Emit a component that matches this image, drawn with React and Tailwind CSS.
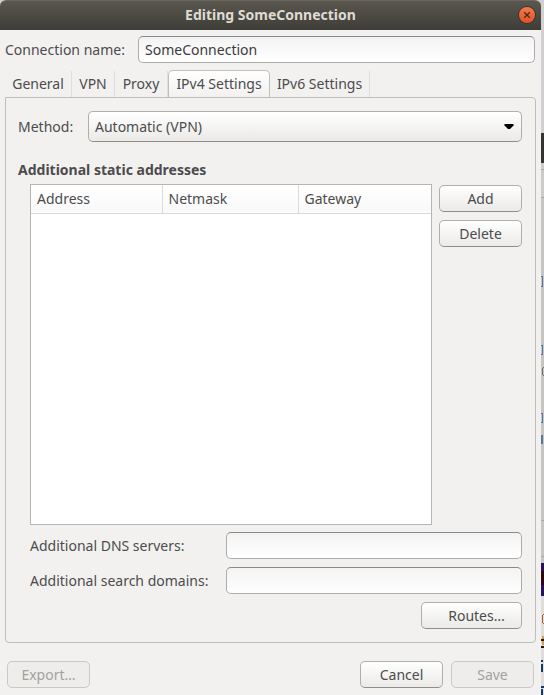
import React from "react";

const buttonBase =
  "h-[27px] rounded-[5px] border text-center leading-5 focus:outline-none";
const buttonLive =
  "border-[#b0aeab] border-b-[#8f8d8a] bg-linear-to-b from-white to-[#ebeae8] text-[#4c4c4c]";
const buttonOff = "border-[#cbc9c7] bg-[#eeedeb] text-[#a3a19e]";
const entry =
  "h-[27px] min-w-0 rounded-[5px] border border-[#aeaca9] border-t-[#8c8a87] bg-linear-to-b from-[#f3f3f3] to-white px-1.5 text-[#3c3c3c] focus:outline-none";

function Button({ className = "", disabled = false, children }) {
  return (
    <button
      type="button"
      disabled={disabled}
      className={`${buttonBase} ${disabled ? buttonOff : buttonLive} ${className}`}
    >
      {children}
    </button>
  );
}

function TitleBar() {
  return (
    <header className="relative flex h-[30px] items-center justify-center rounded-t-[6px] border-t border-[#6b675f] bg-linear-to-b from-[#5a574f] to-[#3f3d38] pb-0.5">
      <h1 className="text-sm font-bold text-[#dfdbd2]">Editing SomeConnection</h1>
      <button
        type="button"
        aria-label="Close"
        className="absolute top-1.5 right-1.5 flex size-4 items-center justify-center rounded-full bg-linear-to-b from-[#f4784f] to-[#e2511f] ring-1 ring-[#35332e]"
      >
        <svg viewBox="0 0 16 16" className="size-4" aria-hidden="true">
          <path d="M5.2 5.2l5.6 5.6M10.8 5.2l-5.6 5.6" stroke="#4b2a1b" strokeWidth="1.3" />
        </svg>
      </button>
    </header>
  );
}

const tabs = [
  { name: "General", width: "w-[67px]" },
  { name: "VPN", width: "w-[43px]" },
  { name: "Proxy", width: "w-[53px]" },
  { name: "IPv4 Settings", width: "w-[102px]", active: true },
  { name: "IPv6 Settings", width: "w-[100px]" },
];

function Tabs() {
  return (
    <div role="tablist" className="mx-[5px] mt-[7px] flex h-[27px] items-end whitespace-nowrap">
      {tabs.map((tab) => (
        <button
          key={tab.name}
          type="button"
          role="tab"
          aria-selected={Boolean(tab.active)}
          className={`flex shrink-0 items-center justify-center ${tab.width} ${
            tab.active
              ? "h-[27px] rounded-t-[5px] border border-b-0 border-[#c0beba] bg-linear-to-b from-white to-[#f2f1f0]"
              : "h-[26px] border-r border-[#e0dedc]"
          }`}
        >
          {tab.name}
        </button>
      ))}
    </div>
  );
}

function AddressTable() {
  return (
    <div className="min-w-0 flex-1 border border-[#b8b6b2] bg-white">
      <table className="w-full table-fixed border-collapse text-left">
        <colgroup>
          <col className="w-[131px]" />
          <col className="w-[136px]" />
          <col />
        </colgroup>
        <thead>
          <tr className="h-7 border-b border-[#d8d7d4] bg-linear-to-b from-white to-[#f9f9f9]">
            <th className="border-r border-[#dddbd9] px-1.5 font-normal">Address</th>
            <th className="border-r border-[#dddbd9] px-1.5 font-normal">Netmask</th>
            <th className="px-1.5 font-normal">Gateway</th>
          </tr>
        </thead>
        <tbody />
      </table>
    </div>
  );
}

function Ipv4Panel() {
  return (
    <section
      role="tabpanel"
      className="mx-[5px] flex flex-1 flex-col rounded-[4px] rounded-tl-none border border-[#c0beba] py-[13px] pr-[13px] pl-3"
    >
      <div className="flex items-center">
        <label htmlFor="method" className="w-[70px] shrink-0">
          Method:
        </label>
        <div className="relative min-w-0 flex-1">
          <select
            id="method"
            className="block h-[31px] w-full appearance-none rounded-[5px] border border-[#b0aeab] border-b-[#8f8d8a] bg-linear-to-b from-white to-[#ebeae8] px-1.5 focus:outline-none"
          >
            <option>Automatic (VPN)</option>
          </select>
          <svg
            viewBox="0 0 10 6"
            className="pointer-events-none absolute top-[13px] right-2 h-1.5 w-2.5"
            aria-hidden="true"
          >
            <path d="M0.5 0h9v1.5L6 5H4L0.5 1.5z" fill="#000" />
          </svg>
        </div>
      </div>

      <h2 className="mt-[18px] font-bold">Additional static addresses</h2>

      <div className="mt-1 ml-3 flex flex-1 flex-col gap-[7px]">
        <div className="flex flex-1 gap-[7px]">
          <AddressTable />
          <div className="flex w-[83px] flex-col gap-2 pt-px">
            <Button>Add</Button>
            <Button>Delete</Button>
          </div>
        </div>
        <div className="flex flex-col gap-2">
          <div className="flex items-center">
            <label htmlFor="dns" className="w-[196px] shrink-0">
              Additional DNS servers:
            </label>
            <input id="dns" type="text" className={`${entry} flex-1`} />
          </div>
          <div className="flex items-center">
            <label htmlFor="domains" className="w-[196px] shrink-0">
              Additional search domains:
            </label>
            <input id="domains" type="text" className={`${entry} flex-1`} />
          </div>
          <Button className="w-[101px] self-end pl-2.5">Routes…</Button>
        </div>
      </div>
    </section>
  );
}

function Desktop() {
  return (
    <svg
      viewBox="0 0 3 695"
      preserveAspectRatio="none"
      className="w-[3px] shrink-0 self-stretch"
      aria-hidden="true"
    >
      <path d="M0 0h3v695H0z" fill="#c6c5c4" />
      <path d="M0 0h3v133H0z" fill="#d0cfd1" />
      <path d="M0 133h3v30H0z" fill="#353432" />
      <path d="M0 163h3v34H0z" fill="#cccbca" />
      <path d="M0 169h3v1H0zM0 197h3v1H0zM0 520h3v1H0zM0 556h3v1H0z" fill="#aaa9a8" />
      <path d="M0 563h3v33H0z" fill="#271158" />
      <path d="M0 571h3v14H0z" fill="#2b0712" />
      <path d="M0 596h3v99H0z" fill="#dedddc" />
      <path
        d="M0 276h2v1H0zM1 277h1v10H1zM0 286h1v1H0zM0 345h2v1H0zM1 346h1v9H1zM0 354h1v1H0zM0 413h2v1H0zM1 414h1v9H1zM0 422h1v1H0zM0 435h2v9H0z"
        fill="#5877a0"
      />
      <path d="M1 368h1v7H1zM2 367h1v1H2zM2 375h1v1H2z" fill="#6d6a72" />
      <path d="M1 615h1v8H1zM2 614h1v1H2zM2 623h1v1H2z" fill="#a65e2a" />
      <path d="M0 639h3v2H0zM0 646h3v2H0z" fill="#17181d" />
      <path d="M1 636h2v3H1zM1 641h2v4H1z" fill="#d99b46" />
      <path d="M0 660h2v2H0zM0 664h2v8H0zM0 686h3v2H0zM0 689h2v6H0z" fill="#173964" />
    </svg>
  );
}

export default function App() {
  return (
    <div className="flex min-h-screen bg-[#d0cfd1] font-['Noto_Sans','Open_Sans',sans-serif] text-sm leading-5 text-[#4c4c4c]">
      <main className="flex min-w-0 flex-1 flex-col rounded-t-[6px] bg-[#f2f1f0]">
        <TitleBar />
        <div className="mt-1.5 flex items-center px-1.5 pl-[5px]">
          <label htmlFor="connection-name" className="w-[133px] shrink-0">
            Connection name:
          </label>
          <input
            id="connection-name"
            type="text"
            defaultValue="SomeConnection"
            className={`${entry} flex-1`}
          />
        </div>
        <Tabs />
        <Ipv4Panel />
        <footer className="flex gap-2 px-[7px] pt-[18px] pb-[7px]">
          <Button disabled className="mr-auto w-[83px]">
            Export…
          </Button>
          <Button className="w-[83px]">Cancel</Button>
          <Button disabled className="w-[83px]">
            Save
          </Button>
        </footer>
      </main>
      <Desktop />
    </div>
  );
}
